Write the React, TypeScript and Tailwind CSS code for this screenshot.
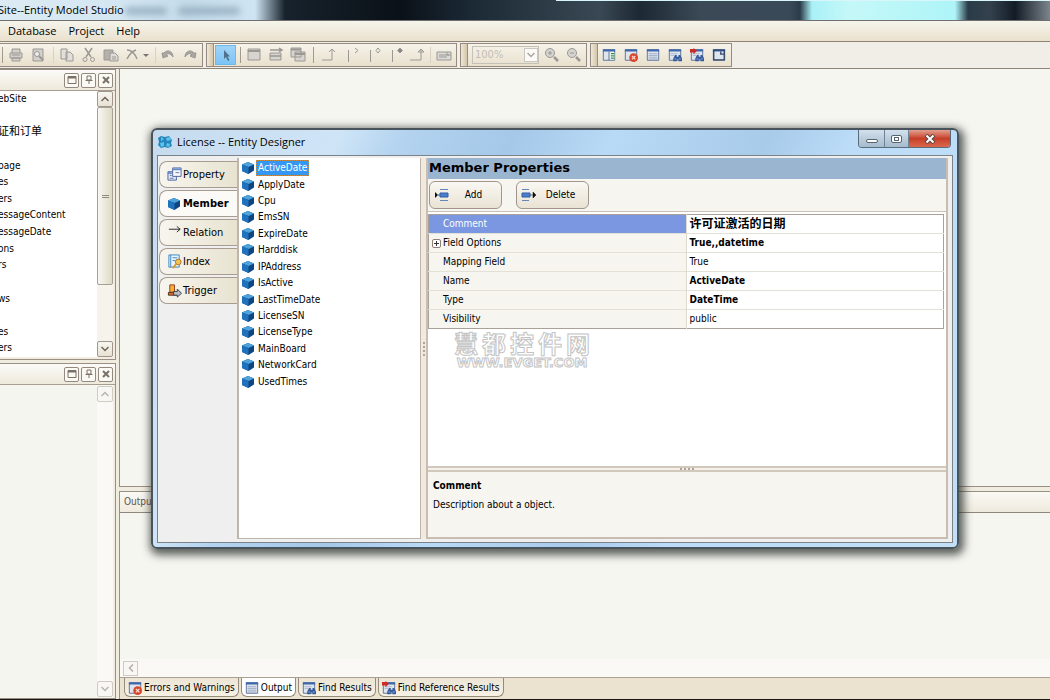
import type { ReactNode } from 'react';
import { clsx } from 'clsx';

const members = [
  'ActiveDate',
  'ApplyDate',
  'Cpu',
  'EmsSN',
  'ExpireDate',
  'Harddisk',
  'IPAddress',
  'IsActive',
  'LastTimeDate',
  'LicenseSN',
  'LicenseType',
  'MainBoard',
  'NetworkCard',
  'UsedTimes',
];

const treeRows = [
  'ebSite',
  '',
  '证和订单',
  '',
  'page',
  'es',
  'ers',
  'essageContent',
  'essageDate',
  'ons',
  'rs',
  '',
  'ws',
  '',
  'es',
  'ers',
];

const properties = [
  { name: 'Comment', value: '许可证激活的日期', bold: true, selected: true, large: true },
  { name: 'Field Options', value: 'True,,datetime', bold: true, expandable: true },
  { name: 'Mapping Field', value: 'True' },
  { name: 'Name', value: 'ActiveDate', bold: true },
  { name: 'Type', value: 'DateTime', bold: true },
  { name: 'Visibility', value: 'public' },
];

export default function App() {
  return (
    <div className="relative flex h-screen min-h-[600px] flex-col overflow-hidden border-b border-[#1c1410] bg-[#f1ece0] font-['DejaVu_Sans_Condensed','DejaVu_Sans','Noto_Sans_CJK_SC',sans-serif] text-[10px] leading-4 text-black">
      <TitleBar />
      <MenuBar />
      <Toolbars />
      <div className="flex min-h-0 flex-1 gap-[3px]">
        <Sidebar />
        <Workspace />
      </div>
      <EntityDesigner />
    </div>
  );
}

function TitleBar() {
  return (
    <header className="relative flex h-[21px] shrink-0 items-center border-b border-[#6d6f6e] bg-[linear-gradient(90deg,#dcebf3_0,#d3e6f2_120px,#c5dbea_190px,#cfe4f2_255px,#17222c_285px,#0a1118_400px,#1b2935_470px,#3a4855_600px,#1c2833_640px,#3b4957_700px,#3a4958_790px,#2b3c49_800px,#a9f1f7_812px,#c5f8f8_850px,#aef4f8_955px,#2a3b48_968px,#33414d_990px,#131c26_1015px,#7c858c_1050px)]">
      <div className="absolute inset-x-0 top-0 ml-[556px] h-px bg-[#d8f6fa]" />
      <div className="absolute left-[125px] top-[7px] h-2 w-[42px] rounded-full bg-[#7d97ab]/60 blur-[3px]" />
      <div className="absolute left-[178px] top-[7px] h-2 w-[62px] rounded-full bg-[#7d97ab]/60 blur-[3px]" />
      <h1 className="-ml-0.5 font-['Open_Sans','Noto_Sans',sans-serif] text-[11px]">
        Site--Entity Model Studio
      </h1>
    </header>
  );
}

function MenuBar() {
  return (
    <nav className="flex h-[21px] shrink-0 items-center gap-3 border-b border-[#8f8478] bg-linear-to-b from-[#f6f4ec] to-[#eae1cd] pl-2 font-['Open_Sans','Noto_Sans',sans-serif] text-[11px]">
      <button>Database</button>
      <button>Project</button>
      <button>Help</button>
    </nav>
  );
}

function Toolbars() {
  return (
    <div className="flex h-[27px] shrink-0 items-center gap-[3px] border-b border-[#8d8379] bg-[#f0eee6]">
      <Strip first>
        <Divider className="ml-0.5" />
        <Tool label="Print" className="ml-0.5">
          <path d="M4 6V2h8v4M2 6h12v5H2zM4 11v3h8v-3z" fill="#d3d0cb" />
          <path d="M4 8h8" />
        </Tool>
        <Tool label="Print preview">
          <path d="M3 2h10v12H3z" fill="#d3d0cb" />
          <circle cx="7" cy="7" r="2.5" fill="#eee" />
          <path d="M9 9l4 4" strokeWidth="2" />
        </Tool>
        <Divider className="ml-1 mr-0.5" light />
        <Tool label="Copy">
          <path d="M2 2h6v10H2zM7 5h4l3 3v6H7z" fill="#e2dfda" />
        </Tool>
        <Tool label="Cut">
          <path d="M4 1l6 9M11 1L5 10" strokeWidth="1.5" />
          <circle cx="4" cy="12.500" r="2" />
          <circle cx="11.500" cy="12.500" r="2" />
        </Tool>
        <Tool label="Paste">
          <path d="M1 3h9v10H1z" fill="#b4b1ad" />
          <path d="M7 6h5l3 3v5H7z" fill="#dedbd6" />
          <path d="M9 10h4M9 12h4" />
        </Tool>
        <Tool label="Delete">
          <path d="M2 3c5 0 8 4 10 9M11 3C8 4 4 8 2 12" strokeWidth="1.5" />
        </Tool>
        <span className="-ml-px border-x-[3px] border-t-[3px] border-x-transparent border-t-[#77736e]" />
        <Divider className="ml-1.5 mr-px" light />
        <Tool label="Undo">
          <path d="M2 6l1 5 5-2-2-1c2-2 4-2 7 2 0-6-6-8-9-4z" fill="#aaa7a3" />
        </Tool>
        <Tool label="Redo">
          <path d="M14 6l-1 5-5-2 2-1C8 6 6 6 3 10c0-6 6-8 9-4z" fill="#aaa7a3" />
        </Tool>
      </Strip>

      <Strip>
        <button
          aria-label="Pointer"
          className="ml-px flex h-5 w-[21px] items-center justify-center border border-[#6cb9ec] bg-linear-to-b from-[#9fd3f8] to-[#7cc4f6]"
        >
          <svg viewBox="0 0 16 16" className="h-4 w-4">
            <path d="M6 3v9l2-2 2 4 1.500-1-2-3.500H12z" fill="#51708a" />
          </svg>
        </button>
        <Divider className="ml-1 mr-0.5" />
        <Tool label="Entity">
          <path d="M2 2h12v11H2z" fill="#d7d4cf" />
          <path d="M2 4h12" strokeWidth="2" />
        </Tool>
        <Tool label="Relation entity">
          <path d="M2 6h11v7H2z" fill="#d7d4cf" />
          <path d="M2 3h11M11 1l3 2-3 2M2 9h11" strokeWidth="1.500" />
        </Tool>
        <Tool label="Copy entity">
          <path d="M1 1h10v9H1zM5 5h10v9H5z" fill="#d7d4cf" />
          <path d="M1 2.500h10M5 7h10" strokeWidth="2" />
        </Tool>
        <Divider className="mx-1" />
        <Tool label="Inheritance">
          <path d="M1 13h10V3M8 5l3-3 3 3" />
        </Tool>
        <Tool label="Association">
          <path d="M5.500 3v12M12 1l3 2.500L12 6" />
        </Tool>
        <Tool label="Aggregation">
          <path d="M5.500 3v12M13 1l2 2.500L13 6l-2-2.500z" />
        </Tool>
        <Tool label="Composition">
          <path d="M5.500 3v12" />
          <path d="M13 1l2.500 2.500L13 6l-2.500-2.500z" fill="#888" />
        </Tool>
        <Tool label="Dependency">
          <path d="M1 13h11V3M9 5l3-3 3 3z" />
        </Tool>
        <Divider className="ml-0.5 mr-0.5" light />
        <Tool label="Note">
          <path d="M1 5h14v8H1z" fill="#dcdad6" />
          <path d="M3 8h10M3 10h8M11 5v3h4" />
        </Tool>
      </Strip>

      <Strip>
        <div className="relative ml-1 h-[18px] w-[67px] border border-[#c5c0b8]">
          <select
            aria-label="Zoom"
            disabled
            className="h-full w-full appearance-none pl-0.5 text-[11px] text-[#c1bdb5]"
          >
            <option>100%</option>
          </select>
          <span className="pointer-events-none absolute right-0 top-px flex h-3.5 w-3.5 items-center justify-center border border-[#c9c6c0] bg-[#fbfaf7]">
            <Chevron className="h-2 w-2 text-[#a9a59f]" />
          </span>
        </div>
        <Tool label="Zoom in" className="ml-0.5">
          <circle cx="6" cy="6" r="4.500" fill="#d5d3cf" />
          <path d="M4 6h4M6 4v4" />
          <path d="M10 10l4 4" strokeWidth="2.500" />
        </Tool>
        <Tool label="Zoom out">
          <circle cx="6" cy="6" r="4.500" fill="#d5d3cf" />
          <path d="M4 6h4" />
          <path d="M10 10l4 4" strokeWidth="2.500" />
        </Tool>
      </Strip>

      <Strip>
        <ColorTool label="Solution">
          <PaneIcon kind="solution" />
        </ColorTool>
        <ColorTool label="Errors and Warnings">
          <PaneIcon kind="errors" />
        </ColorTool>
        <ColorTool label="Output">
          <PaneIcon kind="output" />
        </ColorTool>
        <ColorTool label="Find Results">
          <PaneIcon kind="find" />
        </ColorTool>
        <ColorTool label="Find Reference Results">
          <PaneIcon kind="reference" />
        </ColorTool>
        <ColorTool label="Properties">
          <PaneIcon kind="window" />
        </ColorTool>
      </Strip>
    </div>
  );
}

function Strip({ first, children }: { first?: boolean; children: ReactNode }) {
  return (
    <div
      className={clsx(
        'flex h-6 items-center border border-[#958b80] bg-linear-to-b from-[#f6f3ea] to-[#e9e0cd] pr-px',
        first && 'border-l-0',
      )}
    >
      {!first && (
        <span className="h-full w-[7px] border-r border-[#988e82] bg-linear-to-r from-[#efe7d7] to-[#d3c6a9]" />
      )}
      {children}
    </div>
  );
}

function Divider({ className, light }: { className?: string; light?: boolean }) {
  return (
    <span className={clsx('h-4 w-px', light ? 'bg-[#d9d2c4]' : 'bg-[#a29a8f]', className)} />
  );
}

function Tool({
  label,
  className,
  children,
}: {
  label: string;
  className?: string;
  children: ReactNode;
}) {
  return (
    <button
      aria-label={label}
      className={clsx('flex h-5 w-[22px] shrink-0 items-center justify-center', className)}
    >
      <svg viewBox="0 0 16 16" className="h-4 w-4" fill="none" stroke="#9b9894">
        {children}
      </svg>
    </button>
  );
}

function ColorTool({ label, children }: { label: string; children: ReactNode }) {
  return (
    <button aria-label={label} className="flex h-5 w-[22px] items-center justify-center">
      {children}
    </button>
  );
}

type PaneKind = 'solution' | 'errors' | 'output' | 'find' | 'reference' | 'window';

function PaneIcon({ kind }: { kind: PaneKind }) {
  return (
    <svg viewBox="0 0 16 16" className="h-3.5 w-3.5 shrink-0">
      <path d="M1.500 2h13v12h-13z" fill="#dfe5ee" stroke="#536b94" />
      <path d="M1 1.500h14v2.500H1z" fill="#3e66ad" />
      {kind === 'solution' && (
        <>
          <path d="M9 5h5v8H9z" fill="#fff" />
          <path d="M10 6.500h4M10 9h4M10 11.500h4" stroke="#33913c" strokeWidth="1.500" />
          <path d="M8 4v10" stroke="#536b94" />
        </>
      )}
      {kind === 'errors' && (
        <>
          <circle cx="11" cy="11" r="5" fill="#d9452c" />
          <path d="M9 9l4 4M13 9l-4 4" stroke="#ffe3cf" strokeWidth="1.500" />
        </>
      )}
      {kind === 'output' && (
        <path d="M3 6.500h10M3 8.500h10M3 10.500h10M3 12.500h10" stroke="#98a8c2" />
      )}
      {(kind === 'find' || kind === 'reference') && (
        <>
          <path d="M3 6.500h8M3 8.500h4" stroke="#a7b4ca" />
          <path d="M8 8h2v2h2V8h2l2 4v3h-4v-2h-2v2H6v-3z" fill="#35599a" />
          <path d="M7.500 12.500h2M12.500 12.500h2" stroke="#9ec2ee" />
        </>
      )}
      {kind === 'reference' && (
        <path d="M0 1h4V0l4 3-4 4V5H0z" fill="#cc2c25" />
      )}
      {kind === 'window' && (
        <path d="M2 2.500h12v11H2zM10 4v3h4" fill="none" stroke="#33476b" strokeWidth="1.500" />
      )}
    </svg>
  );
}

function Chevron({ className }: { className?: string }) {
  return (
    <svg viewBox="0 0 8 8" className={className} fill="none" stroke="currentColor" strokeWidth="1.500">
      <path d="M0.500 2l3.500 3.500L7.500 2" />
    </svg>
  );
}

function Sidebar() {
  return (
    <aside className="flex w-[116px] shrink-0 flex-col gap-[3px]">
      <section className="flex flex-col border-r border-t border-b border-[#9a8f85] bg-[#f2ece1]">
        <PaneHeader />
        <div className="mr-0.5 flex h-[266px] bg-white">
          <ul className="-ml-0.5 grid flex-1 auto-rows-fr">
            {treeRows.map((row, i) => (
              <li key={i} className={clsx('whitespace-nowrap', i === 2 && 'text-[11px]')}>
                {row}
              </li>
            ))}
          </ul>
          <div className="flex w-4 flex-col bg-[#f6f3ec]">
            <ScrollButton up />
            <div className="flex h-[178px] items-center justify-center rounded-xs border border-[#a89f95] bg-linear-to-r from-[#f8f7f2] to-[#dfdac6]">
              <span className="h-[3px] w-[7px] border-y border-[#8f8b80]" />
            </div>
            <div className="flex-1" />
            <ScrollButton />
          </div>
        </div>
        <div className="h-0.5" />
      </section>
      <section className="flex min-h-0 flex-1 flex-col border-r border-t border-b border-[#9a8f85] bg-[#f2ece1]">
        <PaneHeader />
        <div className="mr-0.5 flex flex-1 justify-end bg-[#f5f5f0] pb-px pt-px">
          <div className="flex w-4 flex-col justify-between bg-[#faf9f5]">
            <ScrollButton up disabled />
            <ScrollButton disabled />
          </div>
        </div>
      </section>
    </aside>
  );
}

function PaneHeader() {
  return (
    <div className="flex h-[21px] shrink-0 items-center justify-end gap-0.5 border-b border-[#a99d92] bg-linear-to-b from-[#fbfaf7] to-[#eee9dc] pr-0.5">
      <HeaderButton label="Window position">
        <path d="M1 1.500h8v7H1z" />
        <path d="M1 2.500h8" strokeWidth="2" />
      </HeaderButton>
      <HeaderButton label="Pin">
        <path d="M3 1h4v4H3zM1.500 5.500h7M5 5.500V9" />
      </HeaderButton>
      <HeaderButton label="Close">
        <path d="M2 2l6 6M8 2L2 8" strokeWidth="2" />
      </HeaderButton>
    </div>
  );
}

function HeaderButton({ label, children }: { label: string; children: ReactNode }) {
  return (
    <button
      aria-label={label}
      className="flex h-[15px] w-[15px] items-center justify-center rounded-xs border border-[#948980] bg-[#fbf9f4]"
    >
      <svg viewBox="0 0 10 10" className="h-2.5 w-2.5" fill="none" stroke="#7a7168">
        {children}
      </svg>
    </button>
  );
}

function ScrollButton({ up, disabled }: { up?: boolean; disabled?: boolean }) {
  return (
    <button
      aria-label={up ? 'Scroll up' : 'Scroll down'}
      disabled={disabled}
      className={clsx(
        'flex h-4 w-full shrink-0 items-center justify-center rounded-xs border',
        disabled
          ? 'border-[#d0ccc4] bg-[#f8f7f3] text-[#b9b5ae]'
          : 'border-[#a0968c] bg-linear-to-b from-[#f8f6f0] to-[#e8e2d3] text-[#6c645b]',
      )}
    >
      <Chevron className={clsx('h-2 w-2', up && 'rotate-180')} />
    </button>
  );
}

function Workspace() {
  const tabs: { label: string; kind: PaneKind }[] = [
    { label: 'Errors and Warnings', kind: 'errors' },
    { label: 'Output', kind: 'output' },
    { label: 'Find Results', kind: 'find' },
    { label: 'Find Reference Results', kind: 'reference' },
  ];

  return (
    <main className="flex min-w-0 flex-1 flex-col">
      <div className="flex-1 border-b border-l border-[#9a8f85] bg-[#f6f6f1]" />
      <section className="mt-1 flex h-[208px] flex-col border-l border-t border-[#9a8f85]">
        <h2 className="flex h-[21px] shrink-0 items-center border-b border-[#8f867c] bg-linear-to-b from-[#faf9f5] to-[#efeadd] pl-1 text-[#5d534a]">
          Output
        </h2>
        <div className="flex-1 bg-[#f6f6f1]" />
        <div className="flex h-[19px] items-center border-b border-[#aaa094] bg-[#faf9f6] pl-[3px]">
          <button
            aria-label="Scroll left"
            disabled
            className="flex h-[15px] w-[15px] items-center justify-center border border-[#cfcac2] bg-[#f8f7f3] text-[#b3aea7]"
          >
            <Chevron className="h-2 w-2 rotate-90" />
          </button>
        </div>
        <div role="tablist" className="flex h-[21px] items-start gap-0.5 bg-[#ebe2cf] pl-1">
          {tabs.map((tab) => (
            <button
              key={tab.label}
              role="tab"
              aria-selected={tab.kind === 'output'}
              className={clsx(
                'flex h-[19px] items-center gap-0.5 rounded-b-md border border-t-0 border-[#948a7e] pl-[3px] pr-[3px] pt-0.5',
                tab.kind === 'output' ? 'bg-white' : 'bg-linear-to-b from-[#ece5d5] to-[#f6f1e5]',
              )}
            >
              <PaneIcon kind={tab.kind} />
              {tab.label}
            </button>
          ))}
        </div>
      </section>
    </main>
  );
}

function EntityDesigner() {
  return (
    <section
      role="dialog"
      aria-labelledby="designer-title"
      className="absolute bottom-[150px] left-[151px] right-[91px] top-[128px] flex flex-col rounded-md border-2 border-[#48535c] bg-[linear-gradient(115deg,#c6dcee_0,#cfe5f7_170px,#b3d3ef_230px,#a5c8e9_330px,#b9daf6_420px,#a8cbea_560px,#bcdcf8_640px,#c2dff7_100%)] px-1 pb-1 shadow-[2px_3px_9px_3px_rgba(40,45,40,0.75)]"
    >
      <header className="flex h-[25px] shrink-0 items-start justify-between">
        <div className="flex h-6 items-center gap-1">
          <svg viewBox="0 0 16 16" className="h-4 w-4">
            <path d="M4 2l4 1 4-1 3 4-1 3 1 3-4 2-3-1-4 1-3-3 1-3-1-4z" fill="#2486bd" />
            <path d="M4 3l3 2-3 2zM9 4l4-1 1 3-4 1zM3 9l4-1v4l-3 1zM10 9l3 1-1 3-3-1z" fill="#5fc2ea" />
          </svg>
          <h2
            id="designer-title"
            className="font-['Open_Sans','Noto_Sans',sans-serif] text-[11px]"
          >
            License -- Entity Designer
          </h2>
        </div>
        <div className="mr-0.5 flex h-[18px] overflow-hidden rounded-b border border-t-0 border-[#5a6b7c]">
          <button
            aria-label="Minimize"
            className="flex w-[26px] items-center justify-center border-r border-[#6f8395] bg-linear-to-b from-[#d3e1ed] via-[#bccddc] via-50% to-[#a5bccf]"
          >
            <span className="mt-1 h-1 w-3 rounded-xs border border-[#566470] bg-white" />
          </button>
          <button
            aria-label="Maximize"
            className="flex w-6 items-center justify-center border-r border-[#6f8395] bg-linear-to-b from-[#d3e1ed] via-[#bccddc] via-50% to-[#a5bccf]"
          >
            <span className="flex h-2 w-[11px] items-center justify-center rounded-xs border border-[#566470] bg-white">
              <span className="h-1 w-[5px] border border-[#566470]" />
            </span>
          </button>
          <button
            aria-label="Close"
            className="flex w-[41px] items-center justify-center bg-linear-to-b from-[#e2a08f] via-[#c63e28] via-50% to-[#d9684c]"
          >
            <svg viewBox="0 0 12 10" className="h-2.5 w-3">
              <path d="M2 1l8 8M10 1L2 9" stroke="#5d4444" strokeWidth="4" />
              <path d="M2.500 1.500l7 7M9.500 1.500l-7 7" stroke="#fff" strokeWidth="2" />
            </svg>
          </button>
        </div>
      </header>

      <div className="flex min-h-0 flex-1 border border-[#7b8288] bg-[#efefef] pb-[3px] pr-1 pt-0.5">
        <DesignerTabs />
        <ul className="grid w-[184px] shrink-0 auto-rows-[16px] content-start gap-y-0 border-b border-l-2 border-r border-[#c0b5aa] bg-white pt-0.5">
          <li className="grid h-[230px] auto-rows-fr">
            {members.map((name, i) => (
              <button key={name} className="flex items-center gap-px pl-0.5 text-left">
                <CubeIcon className="h-3.5 w-3.5" />
                <span
                  className={clsx(
                    'px-0.5',
                    i === 0 &&
                      'bg-[#3397f3] text-white outline-1 -outline-offset-1 outline-dotted outline-[#c98a42]',
                  )}
                >
                  {name}
                </span>
              </button>
            ))}
          </li>
        </ul>
        <div className="flex w-[5px] shrink-0 items-center justify-center bg-[#f1ebdf]">
          <Grip vertical />
        </div>
        <MemberProperties />
      </div>
    </section>
  );
}

function DesignerTabs() {
  const tabs = [
    {
      label: 'Property',
      icon: (
        <>
          <path d="M1 5h9v9H1z" fill="#dfe8f8" stroke="#4c649c" />
          <path d="M6 1h9v9H6z" fill="#f5f8fd" stroke="#4c649c" />
          <path d="M6 2.500h9M1 6.500h4" stroke="#6688cc" strokeWidth="2" />
          <path d="M3 9h2M3 12h4M9 6h4" stroke="#6a7594" />
        </>
      ),
    },
    { label: 'Member', icon: null },
    {
      label: 'Relation',
      icon: <path d="M2 4.500h12M10.500 1.500l3.500 3-3.500 3" fill="none" stroke="#222" />,
    },
    {
      label: 'Index',
      icon: (
        <>
          <path d="M2 1h11v13H2z" fill="#e9f4fd" stroke="#3d85c0" />
          <path d="M4 1v13M6 4h5M6 7h3" stroke="#3d85c0" />
          <circle cx="12" cy="8.500" r="3" fill="#f6c55a" stroke="#a8741c" />
          <path d="M10 10.500L6 15" stroke="#d99a2c" strokeWidth="2" />
        </>
      ),
    },
    {
      label: 'Trigger',
      icon: (
        <>
          <path d="M3 2h5v8H3z" fill="#f5b432" stroke="#8c3a20" />
          <path d="M1.500 10h9v3h-9z" fill="#dc6c35" stroke="#51301e" />
          <path d="M7 9h4V6.500l4.500 4.500-4.500 4V13H7z" fill="#b7bdc4" stroke="#3b3f45" />
        </>
      ),
    },
  ];

  return (
    <div role="tablist" className="flex w-[79px] shrink-0 flex-col gap-0.5 pl-px pt-[3px]">
      {tabs.map((tab) => {
        const active = tab.label === 'Member';
        return (
          <button
            key={tab.label}
            role="tab"
            aria-selected={active}
            className={clsx(
              'flex h-[27px] items-center rounded-l-lg border border-r-0 border-[#a89c90] pl-[7px] text-[11px]',
              active
                ? 'bg-[#fbfaf6] font-bold'
                : 'bg-linear-to-r from-[#f7f5ee] to-[#e8e3d0]',
            )}
          >
            {active ? (
              <CubeIcon className="mr-0.5 h-3.5 w-3.5" />
            ) : (
              <svg viewBox="0 0 16 16" className="mr-px h-[15px] w-[15px] shrink-0">
                {tab.icon}
              </svg>
            )}
            {tab.label}
          </button>
        );
      })}
    </div>
  );
}

function CubeIcon({ className }: { className?: string }) {
  return (
    <svg viewBox="0 0 14 14" className={clsx('shrink-0', className)}>
      <path d="M7 1L13 3.500v6L7.500 13 1 10V3.500z" fill="#0f4580" />
      <path d="M7 1L13 3.500 7.500 6 1 3.500z" fill="#4fa3dc" />
      <path d="M1 3.500L7.500 6v7L1 10z" fill="#1f72bb" />
    </svg>
  );
}

function Grip({ vertical }: { vertical?: boolean }) {
  return (
    <span className={clsx('flex gap-0.5', vertical && 'flex-col')}>
      {[0, 1, 2, 3].map((dot) => (
        <span key={dot} className="h-0.5 w-0.5 bg-[#aea596]" />
      ))}
    </span>
  );
}

function MemberProperties() {
  return (
    <div className="flex min-w-0 flex-1 flex-col border-b-2 border-l-2 border-r-2 border-[#c8bdb0] bg-[#f6f5f0]">
      <h3 className="flex h-[21px] shrink-0 items-center bg-[#9ab5d0] pb-0.5 pl-px font-['DejaVu_Sans',sans-serif] text-[13px] font-bold">
        Member Properties
      </h3>
      <div className="flex h-8 shrink-0 items-center gap-3.5 pl-px">
        <ActionButton label="Add">
          <path d="M1 5l3 3-3 3z" fill="#111" />
          <path d="M6 2.500h8M6 13.500h8" stroke="#6685bb" />
          <path d="M4 8h2M6 6h8v4H6z" fill="#4a7fd0" stroke="#2f5da5" />
        </ActionButton>
        <ActionButton label="Delete">
          <path d="M1 2.500h7M1 13.500h7" stroke="#6685bb" />
          <path d="M1 6h8v4H1z" fill="#4a7fd0" stroke="#2f5da5" />
          <path d="M9 8h4M12 5l3 3-3 3z" fill="#111" stroke="#111" strokeWidth="0.500" />
        </ActionButton>
      </div>
      <div className="relative min-h-0 flex-1 border-t border-[#c9c1b6] bg-white pr-0.5 pt-0.5">
        <table className="w-full table-fixed border-collapse border border-[#aaa298]">
          <tbody>
            {properties.map((property) => (
              <tr
                key={property.name}
                className="h-[19px] border-b border-[#e3e0d6] last:border-[#aaa298]"
              >
                <th
                  scope="row"
                  className={clsx(
                    'border-r border-[#dedad0] p-0 text-left font-normal',
                    property.selected ? 'bg-[#7b97e2] text-white' : 'bg-[#f6f5f0]',
                  )}
                >
                  <div className="flex items-center">
                    <span className="flex w-3.5 justify-center">
                      {property.expandable && (
                        <button
                          aria-label="Expand Field Options"
                          className="flex h-[9px] w-[9px] items-center justify-center rounded-xs border border-[#8f7f74] bg-white"
                        >
                          <svg viewBox="0 0 5 5" className="h-[5px] w-[5px]">
                            <path d="M0 2.500h5M2.500 0v5" stroke="#333" />
                          </svg>
                        </button>
                      )}
                    </span>
                    {property.name}
                  </div>
                </th>
                <td
                  className={clsx(
                    'py-0 pl-[3px] pr-0',
                    property.bold && 'font-bold',
                    property.large && 'text-[12px]',
                  )}
                >
                  {property.value}
                </td>
              </tr>
            ))}
          </tbody>
        </table>
        <Watermark />
      </div>
      <div className="flex h-1.5 shrink-0 items-center justify-center border-y-2 border-[#d1c9bd] bg-[#f5f1e8]">
        <Grip />
      </div>
      <div className="h-[65px] shrink-0 px-[5px] pt-1.5">
        <h4 className="font-bold">Comment</h4>
        <p className="mt-[3px]">Description about a object.</p>
      </div>
    </div>
  );
}

function ActionButton({ label, children }: { label: string; children: ReactNode }) {
  return (
    <button className="flex h-7 w-[73px] items-center rounded-md border border-[#a0968b] bg-linear-to-b from-[#faf8f3] to-[#e9e3d4] pl-1">
      <svg viewBox="0 0 16 16" className="h-4 w-4 shrink-0">
        {children}
      </svg>
      <span className="flex-1 pr-1 text-center">{label}</span>
    </button>
  );
}

function Watermark() {
  return (
    <div className="pointer-events-none absolute left-[26px] top-[117px] flex flex-col items-center font-bold text-white [-webkit-text-stroke:1px_#c4c4c4]">
      <div className="flex gap-1 font-['Noto_Sans_CJK_SC',sans-serif] text-[24px] leading-7">
        {['慧', '都', '控', '件', '网'].map((char) => (
          <span key={char}>{char}</span>
        ))}
      </div>
      <span className="font-['DejaVu_Sans',sans-serif] text-[13px] leading-3">WWW.EVGET.COM</span>
    </div>
  );
}
